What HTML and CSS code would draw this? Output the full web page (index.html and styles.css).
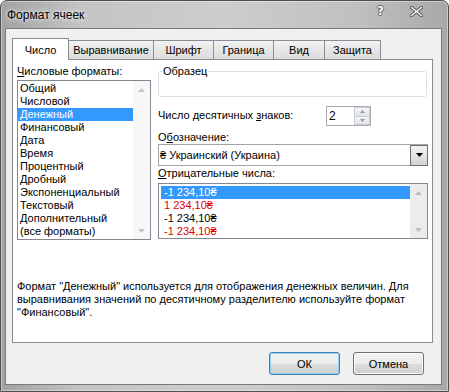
FILE: index.html
```html
<!DOCTYPE html>
<html lang="ru">
<head>
    <meta charset="UTF-8">
    <meta name="viewport" content="width=device-width, initial-scale=1.0">
    <title>Формат ячеек</title>
    <link rel="stylesheet" href="styles.css">
</head>
<body>

    <div class="window">
        <!-- Заголовок окна -->
        <div class="titlebar">
            <span class="title">Формат ячеек</span>
            <span class="title-help">?</span>
            <svg class="title-close" width="13" height="11" viewBox="0 0 13 11">
                <path d="M1.5 1.5 L11.5 9.5 M11.5 1.5 L1.5 9.5" stroke="#575757" stroke-width="3.4" stroke-linecap="round"/>
                <path d="M1.5 1.5 L11.5 9.5 M11.5 1.5 L1.5 9.5" stroke="#fafafa" stroke-width="1.5" stroke-linecap="round"/>
            </svg>
        </div>

        <div class="client">
            <!-- Вкладки -->
            <div class="tabs">
                <div class="tab active">Число</div>
                <div class="tab">Выравнивание</div>
                <div class="tab">Шрифт</div>
                <div class="tab">Граница</div>
                <div class="tab">Вид</div>
                <div class="tab">Защита</div>
            </div>

            <div class="panel">
                <div class="columns">
                    <!-- Список форматов -->
                    <div class="col-left">
                        <div class="label"><u>Ч</u>исловые форматы:</div>
                        <div class="listbox formats">
                            <ul class="items">
                                <li>Общий</li>
                                <li>Числовой</li>
                                <li class="selected">Денежный</li>
                                <li>Финансовый</li>
                                <li>Дата</li>
                                <li>Время</li>
                                <li>Процентный</li>
                                <li>Дробный</li>
                                <li>Экспоненциальный</li>
                                <li>Текстовый</li>
                                <li>Дополнительный</li>
                                <li>(все форматы)</li>
                            </ul>
                            <div class="scrollbar">
                                <div class="scroll-btn">
                                    <svg width="7" height="4" viewBox="0 0 7 4"><polygon points="0,4 3.5,0 7,4" fill="#c3c3c3"/></svg>
                                </div>
                                <div class="scroll-btn">
                                    <svg width="7" height="4" viewBox="0 0 7 4"><polygon points="0,0 7,0 3.5,4" fill="#c3c3c3"/></svg>
                                </div>
                            </div>
                        </div>
                    </div>

                    <!-- Параметры формата -->
                    <div class="col-right">
                        <fieldset class="sample">
                            <legend>Образец</legend>
                            <div class="sample-value"></div>
                        </fieldset>

                        <div class="decimals-row">
                            <span class="decimals-label">Число десятичных <u>з</u>наков:</span>
                            <div class="spin">
                                <span class="spin-value">2</span>
                                <div class="spin-buttons">
                                    <div class="spin-btn">
                                        <svg width="5" height="3" viewBox="0 0 5 3"><polygon points="0,3 2.5,0 5,3" fill="#8a9bb0"/></svg>
                                    </div>
                                    <div class="spin-btn">
                                        <svg width="5" height="3" viewBox="0 0 5 3"><polygon points="0,0 5,0 2.5,3" fill="#8a9bb0"/></svg>
                                    </div>
                                </div>
                            </div>
                        </div>

                        <div class="label label-symbol">О<u>б</u>означение:</div>
                        <div class="combo">
                            <span class="combo-value">₴ Украинский (Украина)</span>
                            <div class="combo-btn">
                                <svg width="7" height="4" viewBox="0 0 7 4"><polygon points="0,0 7,0 3.5,4" fill="#000"/></svg>
                            </div>
                        </div>

                        <div class="label label-negative"><u>О</u>трицательные числа:</div>
                        <div class="listbox negatives">
                            <ul class="items">
                                <li class="selected">-1 234,10₴</li>
                                <li class="red">1 234,10₴</li>
                                <li>-1 234,10₴</li>
                                <li class="red">-1 234,10₴</li>
                            </ul>
                            <div class="scrollbar">
                                <div class="scroll-btn">
                                    <svg width="7" height="4" viewBox="0 0 7 4"><polygon points="0,4 3.5,0 7,4" fill="#bdbdbd"/></svg>
                                </div>
                                <div class="scroll-btn">
                                    <svg width="7" height="4" viewBox="0 0 7 4"><polygon points="0,0 7,0 3.5,4" fill="#bdbdbd"/></svg>
                                </div>
                            </div>
                        </div>
                    </div>
                </div>

                <p class="description">
                    Формат "Денежный" используется для отображения денежных величин. Для<br>
                    выравнивания значений по десятичному разделителю используйте формат<br>
                    "Финансовый".
                </p>
            </div>

            <!-- Кнопки -->
            <div class="buttons">
                <button class="btn default">ОК</button>
                <button class="btn">Отмена</button>
            </div>
        </div>
    </div>

</body>
</html>
```

FILE: styles.css
```css
/* Общие стили */
* {
    box-sizing: border-box;
}

body {
    margin: 0;
    background: #fff;
    font-family: "Liberation Sans", Arial, sans-serif;
    font-size: 11px;
    color: #000;
}

u {
    text-decoration: underline;
    text-underline-offset: 1px;
}

/* Рамка окна */
.window {
    width: 449px;
    height: 392px;
    padding: 0 6px 6px 4px;
    border: 1px solid #4f4f4f;
    border-radius: 7px 7px 0 0;
    background: linear-gradient(to right, #a2a2a2 0%, #c4c4c4 18%, #cdcdcd 50%, #c0c0c0 80%, #a8a8a8 100%);
    box-shadow: inset 0 0 0 1px rgba(255, 255, 255, 0.4);
    display: flex;
    flex-direction: column;
}

.titlebar {
    height: 27px;
    display: flex;
    align-items: flex-start;
}

.title {
    flex: 1;
    margin: 7px 0 0 2px;
    font-size: 12px;
    line-height: 14px;
    text-shadow: 0 0 6px #eee, 0 0 3px #eee;
}

.title-help {
    margin: 3px 26px 0 0;
    font-family: "DejaVu Sans", sans-serif;
    font-weight: bold;
    font-size: 12px;
    line-height: 14px;
    color: #f6f6f6;
    text-shadow: 1px 0 0 #666, -1px 0 0 #666, 0 1px 0 #666, 0 -1px 0 #666;
}

.title-close {
    margin: 5px 19px 0 0;
}

.client {
    flex: 1;
    border: 1px solid #7a7a7a;
    background: #f0f0f0;
    padding: 9px 8px 9px 6px;
    display: flex;
    flex-direction: column;
}

/* Вкладки */
.tabs {
    height: 22px;
    margin-bottom: -1px;
    display: flex;
    align-items: flex-end;
    position: relative;
    z-index: 1;
}

.tab {
    height: 19px;
    margin: 0 -1px 1px 0;
    padding-top: 3px;
    border: 1px solid #898c95;
    border-bottom: none;
    background: linear-gradient(#f3f3f3, #e6e6e6 50%, #dcdcdc);
    text-align: center;
    line-height: 13px;
}

.tab:nth-child(1) { width: 57px; }
.tab:nth-child(2) { width: 86px; }
.tab:nth-child(3) { width: 61px; }
.tab:nth-child(4) { width: 61px; }
.tab:nth-child(5) { width: 52px; }
.tab:nth-child(6) { width: 57px; }

.tab.active {
    height: 22px;
    margin-bottom: 0;
    padding-top: 5px;
    background: #fff;
    position: relative;
    z-index: 2;
}

.panel {
    height: 284px;
    border: 1px solid #898c95;
    background: #fff;
    padding: 5px 4px 0 4px;
}

.columns {
    display: flex;
    gap: 7px;
}

.col-left {
    width: 134px;
}

.col-right {
    width: 270px;
}

.label {
    line-height: 13px;
    white-space: nowrap;
}

/* Списки */
.listbox {
    display: flex;
    border: 1px solid #828790;
    background: #fff;
}

.listbox .items {
    flex: 1;
    margin: 0;
    padding: 1px 0 0 0;
    list-style: none;
}

.listbox li {
    line-height: 13px;
    height: 13px;
    padding-left: 2px;
    white-space: nowrap;
}

.listbox li.selected {
    background: #3399ff;
    color: #fff;
}

.listbox li.red {
    color: #e00000;
}

.formats {
    height: 160px;
    margin-top: 2px;
}

.negatives {
    height: 56px;
    margin-top: 3px;
}

.negatives .items {
    padding: 2px 0 0 2px;
}

.negatives li {
    padding-left: 3px;
}

.scrollbar {
    width: 17px;
    display: flex;
    flex-direction: column;
    justify-content: space-between;
    background: #f7f7f7;
}

.negatives .scrollbar {
    background: #ececec;
}

.scroll-btn {
    height: 17px;
    display: flex;
    align-items: center;
    justify-content: center;
}

/* Образец */
.sample {
    margin: 0 1px 0 0;
    padding: 0 0 0 3px;
    border: 1px solid #d5dfe5;
    border-radius: 3px;
}

.sample legend {
    padding: 0 1px;
    line-height: 13px;
}

.sample-value {
    height: 18px;
}

/* Число десятичных знаков */
.decimals-row {
    margin-top: 9px;
    height: 20px;
    display: flex;
    align-items: center;
}

.decimals-label {
    width: 168px;
    padding-bottom: 2px;
    white-space: nowrap;
}

.spin {
    width: 45px;
    height: 20px;
    border: 1px solid #abadb3;
    display: flex;
    align-items: center;
}

.spin-value {
    flex: 1;
    padding-left: 2px;
    font-size: 12px;
}

.spin-buttons {
    width: 16px;
    height: 18px;
    display: flex;
    flex-direction: column;
}

.spin-btn {
    flex: 1;
    border: 1px solid #c8cdd4;
    background: linear-gradient(#f6f6f6, #e4e4e4);
    display: flex;
    align-items: center;
    justify-content: center;
}

.spin-btn + .spin-btn {
    border-top: none;
}

.label-symbol {
    margin-top: 5px;
}

/* Обозначение */
.combo {
    height: 22px;
    border: 1px solid #a5a5a5;
    display: flex;
    align-items: center;
}

.combo-value {
    flex: 1;
    padding-left: 1px;
    white-space: nowrap;
}

.combo-btn {
    width: 18px;
    height: 21px;
    margin-right: -1px;
    border: 1px solid #6f6f6f;
    background: linear-gradient(#f2f2f2, #e4e4e4 50%, #d2d2d2);
    display: flex;
    align-items: center;
    justify-content: center;
}

.label-negative {
    margin-top: 1px;
}

/* Описание */
.description {
    margin: 40px 0 0 0;
    line-height: 13px;
    white-space: nowrap;
}

/* Кнопки */
.buttons {
    margin-top: 9px;
    padding-right: 9px;
    display: flex;
    justify-content: flex-end;
    gap: 13px;
}

.btn {
    width: 71px;
    height: 23px;
    border: 1px solid #707070;
    border-radius: 3px;
    background: linear-gradient(#f2f2f2, #ebebeb 50%, #dddddd 51%, #cfcfcf);
    box-shadow: inset 0 0 0 1px #fbfbfb;
    font-family: "Liberation Sans", Arial, sans-serif;
    font-size: 11px;
    color: #000;
    padding: 0;
}

.btn.default {
    border-color: #3c7fb1;
    box-shadow: inset 0 0 0 1px #8fd0f3;
}
```
